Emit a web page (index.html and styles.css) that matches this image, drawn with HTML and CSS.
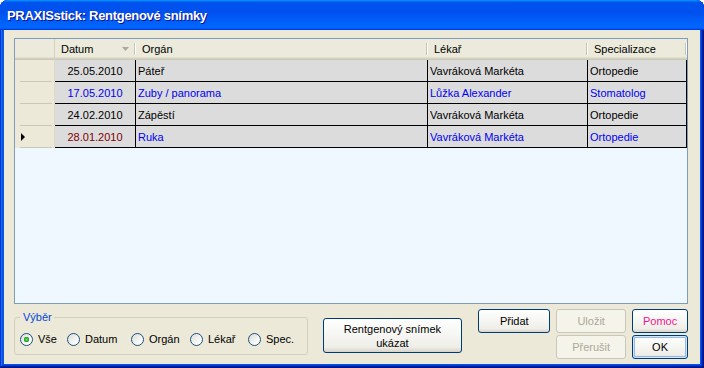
FILE: index.html
```html
<!DOCTYPE html>
<html lang="cs">
<head>
    <meta charset="UTF-8">
    <title>PRAXISstick: Rentgenové snímky</title>
    <link rel="stylesheet" href="styles.css">
</head>
<body>
<div class="window">
    <div class="titlebar">PRAXISstick: Rentgenové snímky</div>
    <div class="body">
        <div class="grid">
            <div class="row head">
                <div class="cell rh"></div>
                <div class="cell c-date">Datum<svg class="sort" width="7" height="4"><path d="M0 0H7L3.5 4Z" fill="#aca899"/></svg><span class="grip"></span></div>
                <div class="cell c-organ">Orgán<span class="grip"></span></div>
                <div class="cell c-doc">Lékař<span class="grip"></span></div>
                <div class="cell c-spec">Specializace<span class="grip"></span></div>
            </div>
            <div class="row">
                <div class="cell rh"></div>
                <div class="cell c-date">25.05.2010</div>
                <div class="cell c-organ">Páteř</div>
                <div class="cell c-doc">Vavráková Markéta</div>
                <div class="cell c-spec">Ortopedie</div>
            </div>
            <div class="row blue">
                <div class="cell rh"></div>
                <div class="cell c-date">17.05.2010</div>
                <div class="cell c-organ">Zuby / panorama</div>
                <div class="cell c-doc">Lůžka Alexander</div>
                <div class="cell c-spec">Stomatolog</div>
            </div>
            <div class="row">
                <div class="cell rh"></div>
                <div class="cell c-date">24.02.2010</div>
                <div class="cell c-organ">Zápěstí</div>
                <div class="cell c-doc">Vavráková Markéta</div>
                <div class="cell c-spec">Ortopedie</div>
            </div>
            <div class="row blue current">
                <div class="cell rh"><span class="pointer"></span></div>
                <div class="cell c-date">28.01.2010</div>
                <div class="cell c-organ">Ruka</div>
                <div class="cell c-doc">Vavráková Markéta</div>
                <div class="cell c-spec">Ortopedie</div>
            </div>
        </div>

        <div class="bottom">
            <fieldset class="group">
                <legend>Výběr</legend>
                <label class="opt w1"><span class="radio checked"></span>Vše</label>
                <label class="opt w2"><span class="radio"></span>Datum</label>
                <label class="opt w3"><span class="radio"></span>Orgán</label>
                <label class="opt w4"><span class="radio"></span>Lékař</label>
                <label class="opt"><span class="radio"></span>Spec.</label>
            </fieldset>
            <button class="btn big">Rentgenový snímek<br>ukázat</button>
            <button class="btn add">Přidat</button>
            <div class="btncol">
                <button class="btn" disabled>Uložit</button>
                <button class="btn" disabled>Přerušit</button>
            </div>
            <div class="btncol narrow">
                <button class="btn help">Pomoc</button>
                <button class="btn default">OK</button>
            </div>
        </div>
    </div>
</div>
</body>
</html>
```

FILE: styles.css
```css
body { margin: 0; background: #fff; font-family: "Liberation Sans", Arial, sans-serif; font-size: 11px; }

.window {
    width: 704px; height: 368px; display: flex; flex-direction: column;
    background: #0855dd; border-radius: 8px 8px 0 0; overflow: hidden;
    box-shadow: inset -1px -1px #00138c, inset 1px 1px #0831d9, inset -2px -2px #001ea0,
                inset 2px 2px #166aee, inset -3px -3px #003bda, inset 3px 3px #0855dd;
}
.titlebar {
    height: 30px; flex: none; display: flex; align-items: center; padding: 1px 0 0 7px; box-sizing: border-box;
    background: linear-gradient(180deg, #0997ff, #0053ee 8%, #0050ee 40%, #06f 88%, #06f 93%, #005bff 95%, #003dd7 96%, #003dd7);
    color: #fff; font-weight: bold; font-size: 13px; letter-spacing: -0.3px; text-shadow: 1px 1px #0f1089;
}
.body {
    flex: 1; margin: 0 4px 4px; padding: 8px 12px 0 10px;
    background: #ece9d8; display: flex; flex-direction: column;
}

/* data grid */
.grid {
    height: 266px; flex: none; box-sizing: border-box; border: 1px solid #7f9db9;
    background: #eff7ff; display: flex; flex-direction: column;
}
.row { display: flex; height: 22px; flex: none; }
.row.head {
    height: 21px; background: #ebeadb;
    box-shadow: inset 0 -1px #cbc7b8, inset 0 -2px #d6d2c2, inset 0 -3px #e2decd;
}
.cell { box-sizing: border-box; display: flex; align-items: center; padding-left: 2px; white-space: nowrap; overflow: hidden; }
.rh { width: 40px; }
.c-date { width: 81px; }
.c-organ { width: 292px; }
.c-doc { width: 160px; }
.c-spec { width: 99px; }

.head .cell { padding-left: 6px; padding-bottom: 2px; }
.head .rh { box-shadow: inset -1px 0 #d6d2c2; }
.grip { width: 1px; height: 12px; margin-left: auto; margin-right: 1px; background: #c7c5b2; box-shadow: 1px 0 #fff; }
.sort { margin-left: auto; }
.sort + .grip { margin-left: 5px; }

.row:not(.head) .cell:not(.rh) { background: #dcdcdc; border-right: 1px solid #000; border-bottom: 1px solid #000; }
.row:not(.head) .c-date { justify-content: center; padding-left: 0; }
.row:not(.head) .rh {
    background: #ece9d8 linear-gradient(#cbc7b8, #cbc7b8) no-repeat 5px 21px / 32px 1px;
    box-shadow: inset -1px 0 #dcd9c9;
}
.blue .cell { color: #0000f0; }
.current .c-date.c-date { background: #ffffc0; color: #800000; }
.pointer { margin-left: 4px; border-left: 4px solid #000; border-top: 4px solid transparent; border-bottom: 4px solid transparent; }

/* bottom controls */
.bottom { display: flex; align-items: flex-start; }
.group {
    margin: 7px 0 0; padding: 0 0 0 5px; width: 294px; height: 44px; box-sizing: border-box;
    border: 1px solid #d0d0bf; border-radius: 3px; display: flex; align-items: center;
}
.group legend { padding: 0 2px 0 3px; color: #0046d5; line-height: 13px; }
.opt { display: flex; align-items: center; gap: 5px; }
.w1 { width: 47px; }
.w2 { width: 64px; }
.w3 { width: 59px; }
.w4 { width: 58px; }
.radio {
    width: 13px; height: 13px; box-sizing: border-box; border-radius: 50%; border: 1px solid #1c5180;
    background: linear-gradient(135deg, #dcdcd7, #fff 85%);
}
.radio.checked { background: radial-gradient(circle, #6add6a 0, #21a121 2.5px, transparent 3px), linear-gradient(135deg, #dcdcd7, #fff 85%); }

.btn {
    font: inherit; color: #000; height: 24px; padding: 0; box-sizing: border-box;
    border: 1px solid #003c74; border-radius: 3px;
    background: linear-gradient(180deg, #fff 0%, #f7f7f4 40%, #efeee8 85%, #d8d3c8 100%);
}
.btn:disabled { color: #aca899; border-color: #c9c7ba; background: #f5f4ea; }
.big { width: 140px; height: 35px; margin: 14px 0 0 15px; line-height: 14px; }
.add { width: 72px; margin: 5px 0 0 16px; }
.btncol { display: flex; flex-direction: column; gap: 2px; width: 70px; margin: 5px 0 0 6px; }
.btncol.narrow { width: 56px; }
.help { color: #f0148c; }
.default { box-shadow: inset 0 0 0 1px #cee7ff, inset 0 0 0 2px #98b8ea; }
```
